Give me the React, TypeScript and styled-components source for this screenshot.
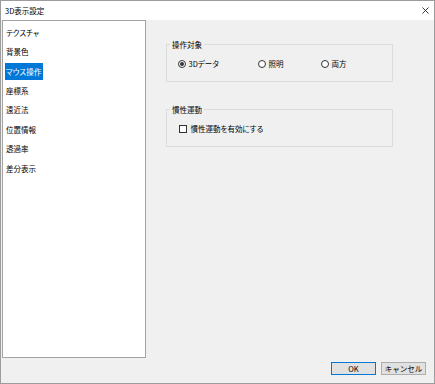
import React, { useState } from 'react'
import styled, { createGlobalStyle, css } from 'styled-components'

const GlobalStyle = createGlobalStyle`
  html, body {
    margin: 0;
    padding: 0;
    background: #f0f0f0;
  }
  body {
    font-family: "Noto Sans CJK JP", "Noto Sans", sans-serif;
    font-feature-settings: "palt";
    color: #000;
  }
  * {
    box-sizing: border-box;
  }
`

const Window = styled.div`
  width: 435px;
  height: 384px;
  border: 1px solid #9c9c9c;
  background: #f0f0f0;
  display: flex;
  flex-direction: column;
`

const TitleBar = styled.div`
  height: 19px;
  background: #fff;
  display: flex;
  align-items: center;
  justify-content: space-between;
  padding: 0 5px 0 4px;
  font-size: 7.5px;
`

const CloseButton = styled.span`
  display: flex;
  width: 7px;
  height: 7px;
`

const Main = styled.div`
  flex: 1;
  display: flex;
  padding-left: 1px;
  min-height: 0;
`

const ListBox = styled.div`
  width: 144px;
  background: #fff;
  border: 1px solid #a3a3a3;
  padding-top: 1.5px;
`

const ListItem = styled.div`
  height: 19.45px;
  display: flex;
  align-items: center;
  padding-left: 2px;
  font-size: 7.5px;
  cursor: default;
`

const ItemLabel = styled.span<{ $selected?: boolean }>`
  display: inline-block;
  line-height: 17px;
  padding: 0 2px 0 1px;
  ${({ $selected }) =>
    $selected &&
    css`
      background: #0078d7;
      color: #fff;
    `}
`

const Pane = styled.div`
  flex: 1;
  display: flex;
  flex-direction: column;
  gap: 23px;
  padding: 19.5px 0 0 20px;
`

const GroupBox = styled.fieldset`
  width: 227px;
  height: 42px;
  margin: 0;
  padding: 10px 0 0 3px;
  border: 1px solid #dcdcdc;
  font-size: 7.5px;
`

const Legend = styled.legend`
  padding: 0 2px;
  line-height: 9px;
`

const RadioRow = styled.div`
  display: grid;
  grid-template-columns: 80px 63px auto;
  margin-left: 8px;
  line-height: 10px;
`

const Choice = styled.label`
  display: flex;
  align-items: center;
  gap: 2.5px;
`

const RadioMark = styled.span<{ $checked?: boolean }>`
  width: 8px;
  height: 8px;
  border-radius: 50%;
  border: 1px solid #333;
  background: #fff;
  display: flex;
  align-items: center;
  justify-content: center;
  &::after {
    content: '';
    width: 4px;
    height: 4px;
    border-radius: 50%;
    background: ${({ $checked }) => ($checked ? '#333' : 'transparent')};
  }
`

const CheckRow = styled.label`
  display: flex;
  align-items: center;
  gap: 4px;
  margin-left: 8.5px;
  line-height: 10px;
`

const CheckMark = styled.span`
  width: 8px;
  height: 8px;
  border: 1px solid #333;
  background: #fff;
`

const Footer = styled.div`
  height: 25px;
  display: flex;
  justify-content: flex-end;
  align-items: flex-start;
  gap: 5px;
  padding: 4px 8px 0 0;
`

const Button = styled.button<{ $default?: boolean }>`
  width: 45px;
  height: 13px;
  padding: 0;
  font-family: inherit;
  font-size: 7.5px;
  line-height: 11px;
  color: #000;
  background: #e1e1e1;
  border: 1px solid ${({ $default }) => ($default ? '#0078d7' : '#adadad')};
`

const items = ['テクスチャ', '背景色', 'マウス操作', '座標系', '遠近法', '位置情報', '透過率', '差分表示']
const targets = [
  { key: 'data', label: '3Dデータ' },
  { key: 'light', label: '照明' },
  { key: 'both', label: '両方' },
]

export default function App() {
  const [selected, setSelected] = useState(2)
  const [target, setTarget] = useState('data')

  return (
    <>
      <GlobalStyle />
      <Window>
        <TitleBar>
          <span>3D表示設定</span>
          <CloseButton>
            <svg width="7" height="7" viewBox="0 0 7 7">
              <path d="M0.5 0.5 L6.5 6.5 M6.5 0.5 L0.5 6.5" stroke="#222" strokeWidth="0.9" fill="none" />
            </svg>
          </CloseButton>
        </TitleBar>
        <Main>
          <ListBox>
            {items.map((item, i) => (
              <ListItem key={item} onClick={() => setSelected(i)}>
                <ItemLabel $selected={i === selected}>{item}</ItemLabel>
              </ListItem>
            ))}
          </ListBox>
          <Pane>
            <GroupBox>
              <Legend>操作対象</Legend>
              <RadioRow>
                {targets.map(t => (
                  <Choice key={t.key} onClick={() => setTarget(t.key)}>
                    <RadioMark $checked={target === t.key} />
                    {t.label}
                  </Choice>
                ))}
              </RadioRow>
            </GroupBox>
            <GroupBox>
              <Legend>慣性運動</Legend>
              <CheckRow>
                <CheckMark />
                慣性運動を有効にする
              </CheckRow>
            </GroupBox>
          </Pane>
        </Main>
        <Footer>
          <Button $default>OK</Button>
          <Button>キャンセル</Button>
        </Footer>
      </Window>
    </>
  )
}
